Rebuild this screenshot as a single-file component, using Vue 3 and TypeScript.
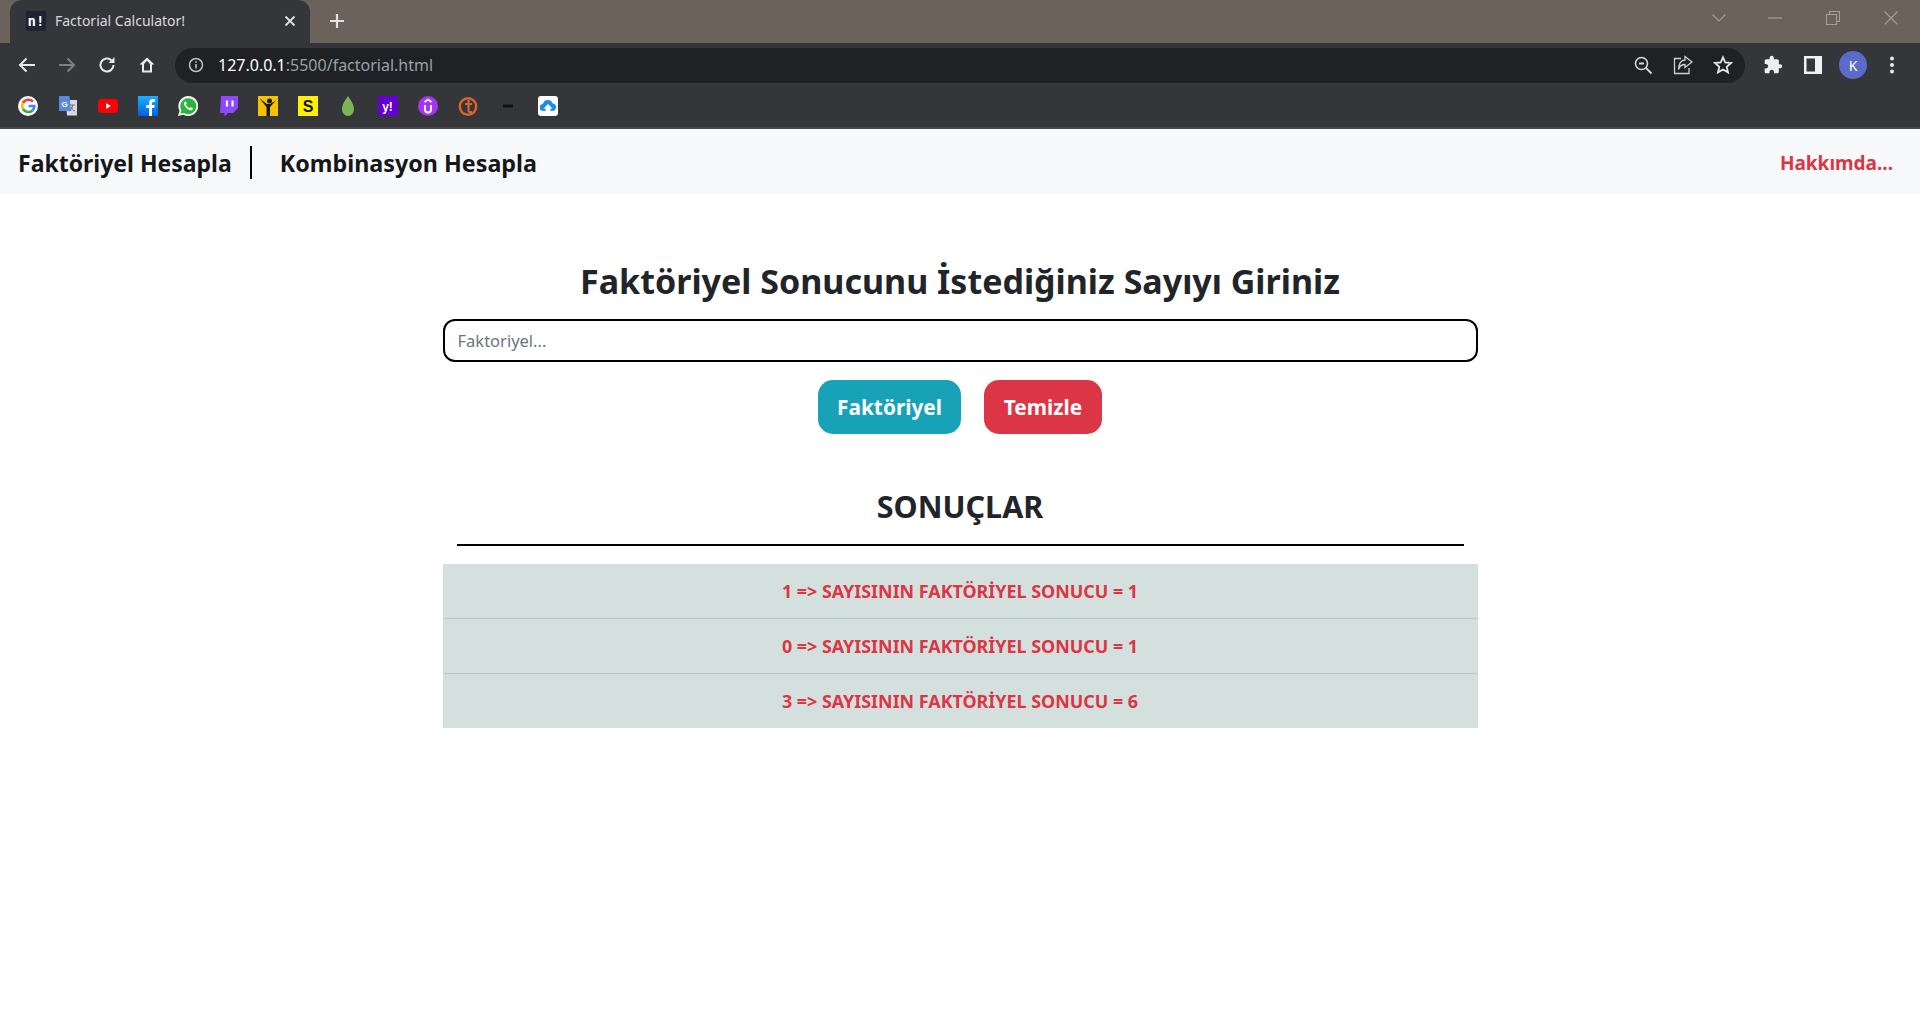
<script setup lang="ts">
const results: { n: number; r: number }[] = [
  { n: 1, r: 1 },
  { n: 0, r: 1 },
  { n: 3, r: 6 },
]
</script>

<template>
  <div class="page">
    <header class="chrome">
      <div class="tabstrip">
        <div class="tab">
          <svg class="fav" width="20" height="20" viewBox="0 0 20 20">
            <rect width="20" height="20" rx="2" fill="#1d2333" />
            <text x="10" y="15" text-anchor="middle" class="favtext">n!</text>
          </svg>
          <span class="tabtitle">Factorial Calculator!</span>
          <svg class="tabclose" width="12" height="12" viewBox="0 0 12 12">
            <path d="M1.5 1.5l9 9M10.5 1.5l-9 9" stroke="#dfe0e2" stroke-width="1.8" fill="none" />
          </svg>
        </div>
        <svg class="plus" width="16" height="16" viewBox="0 0 16 16">
          <path d="M8 1v14M1 8h14" stroke="#e2e2e2" stroke-width="2.2" fill="none" />
        </svg>
        <div class="winctl">
          <svg class="chev" width="16" height="10" viewBox="0 0 16 10"><path d="M1.5 1.5L8 8l6.5-6.5" stroke="#a39d96" stroke-width="1.2" fill="none" /></svg>
          <svg width="14" height="2" viewBox="0 0 14 2"><path d="M0 1h14" stroke="#a39d96" stroke-width="1.2" /></svg>
          <svg width="14" height="14" viewBox="0 0 14 14"><path d="M.5 3.5h10v10H.5zM3.5 3V.5h10v10H11" stroke="#a39d96" stroke-width="1.1" fill="none" /></svg>
          <svg width="14" height="14" viewBox="0 0 14 14"><path d="M.5.5l13 13M13.5.5l-13 13" stroke="#a39d96" stroke-width="1.1" fill="none" /></svg>
        </div>
      </div>

      <div class="toolbar">
        <div class="navicons">
          <svg width="20" height="20" viewBox="0 0 20 20"><path d="M18 10H3M9.5 3.5L3 10l6.500 6.500" stroke="#e8eaed" stroke-width="2" fill="none" /></svg>
          <svg width="20" height="20" viewBox="0 0 20 20"><path d="M2 10h15M10.500 3.500L17 10l-6.500 6.500" stroke="#7d7f82" stroke-width="2" fill="none" /></svg>
          <svg width="20" height="20" viewBox="0 0 20 20"><path d="M16.500 10a6.500 6.500 0 1 1-2-4.700" stroke="#e8eaed" stroke-width="2" fill="none" /><path d="M17.500 2v6h-6z" fill="#e8eaed" /></svg>
          <svg width="20" height="20" viewBox="0 0 20 20"><path d="M10 2.500L2.500 9.500H5v8h10v-8h2.500zM7 15.500V9L10 5.800 13 9v6.500z" fill="#e8eaed" fill-rule="evenodd" /></svg>
        </div>
        <div class="omnibox">
          <svg width="16" height="16" viewBox="0 0 16 16">
            <circle cx="8" cy="8" r="6.500" stroke="#bdc1c6" stroke-width="1.500" fill="none" />
            <path d="M8 7v4.500M8 4.200v1.500" stroke="#bdc1c6" stroke-width="1.600" />
          </svg>
          <span class="url"><b>127.0.0.1</b>:5500/factorial.html</span>
          <div class="omniright">
            <svg width="20" height="20" viewBox="0 0 20 20"><circle cx="8.500" cy="8.500" r="6" stroke="#d5d6d8" stroke-width="1.600" fill="none" /><path d="M13 13l5.500 5.500M6 8.500h5" stroke="#d5d6d8" stroke-width="1.800" fill="none" /></svg>
            <svg width="20" height="20" viewBox="0 0 20 20"><path d="M8 3.500H1.500v15h14.500V13" stroke="#cfd0d2" stroke-width="1.300" fill="none" /><path d="M12 1.500l7 5.500-7 5.500V9.500C8.500 9.500 6.500 11 5.500 14.500 5.500 9 8 5 12 5z" stroke="#cfd0d2" stroke-width="1.300" fill="none" /></svg>
            <svg width="20" height="20" viewBox="0 0 20 20"><path d="M10 2.300l2.300 5.200 5.700.5-4.300 3.800 1.300 5.600L10 14.500l-5 2.900 1.300-5.600L2 8l5.700-.5z" stroke="#e4e5e6" stroke-width="1.800" fill="none" /></svg>
          </div>
        </div>
        <div class="extras">
          <svg width="20" height="20" viewBox="0 0 24 24"><path d="M20.500 11H19V7c0-1.100-.9-2-2-2h-4V3.500C13 2.120 11.880 1 10.500 1S8 2.120 8 3.500V5H4c-1.100 0-1.990.9-1.990 2v3.800H3.500c1.490 0 2.700 1.210 2.700 2.700s-1.210 2.700-2.700 2.700H2V20c0 1.100.9 2 2 2h3.800v-1.500c0-1.490 1.210-2.700 2.700-2.700 1.490 0 2.700 1.210 2.700 2.700V22H17c1.100 0 2-.9 2-2v-4h1.500c1.380 0 2.500-1.120 2.500-2.500S21.880 11 20.500 11z" fill="#eeeff0" /></svg>
          <svg width="18" height="18" viewBox="0 0 18 18"><path d="M0 0h18v18H0zM2.500 2.500v13H11v-13z" fill="#f1f1f2" fill-rule="evenodd" /></svg>
          <div class="avatar">K</div>
          <svg width="6" height="18" viewBox="0 0 6 18"><circle cx="3" cy="2.500" r="2" fill="#e8eaed" /><circle cx="3" cy="9" r="2" fill="#e8eaed" /><circle cx="3" cy="15.500" r="2" fill="#e8eaed" /></svg>
        </div>
      </div>

      <div class="bookmarks">
        <svg width="20" height="20" viewBox="0 0 20 20">
          <circle cx="10" cy="10" r="10" fill="#fff" />
          <path d="M15 5.600A6.300 6.300 0 0 0 5 7" stroke="#ea4335" stroke-width="2.600" fill="none" />
          <path d="M5 7a6.300 6.300 0 0 0 0 6" stroke="#fbbc05" stroke-width="2.600" fill="none" />
          <path d="M5 13a6.300 6.300 0 0 0 9.500 1.500" stroke="#34a853" stroke-width="2.600" fill="none" />
          <path d="M14.500 14.500A6 6 0 0 0 16.300 10H10.500" stroke="#4285f4" stroke-width="2.600" fill="none" />
        </svg>
        <svg width="20" height="20" viewBox="0 0 20 20">
          <path d="M8 4h11v15.500H9z" fill="#d8d9db" />
          <path d="M1 0h10.500l1.500 15H1z" fill="#5a87e0" />
          <text x="6.500" y="10.500" text-anchor="middle" class="gtext">G</text>
          <path d="M12 9h5M14.500 9c0 3-1.500 5-3 6M13 11c.8 2 2.200 3.300 4 4" stroke="#6d6e70" stroke-width="1" fill="none" />
        </svg>
        <svg width="20" height="20" viewBox="0 0 20 20">
          <rect y="3" width="20" height="14" rx="4" fill="#f00" />
          <path d="M8 7l5 3-5 3z" fill="#fff" />
        </svg>
        <svg width="20" height="20" viewBox="0 0 20 20">
          <defs>
            <linearGradient id="fb" x1="0" y1="0" x2="0" y2="1">
              <stop offset="0" stop-color="#19afff" />
              <stop offset="1" stop-color="#0062e0" />
            </linearGradient>
          </defs>
          <rect width="20" height="20" fill="url(#fb)" />
          <path d="M11 20v-8h-2.800V9H11V7c0-2.600 1.500-4 3.800-4h2v3h-1.500c-1 0-1.300.6-1.300 1.400V9h2.800l-.5 3H14v8z" fill="#fff" />
        </svg>
        <svg width="20" height="20" viewBox="0 0 20 20">
          <path d="M0 20l1.500-5.300A10 10 0 1 1 5.400 18.700z" fill="#f2f2f2" />
          <path d="M2.400 17.600l1-3.300A8 8 0 1 1 6 17z" fill="#29b53f" />
          <path d="M7 5.500C5.500 6.500 5.500 8.500 7.500 11c2 2.500 4.500 3.800 6 3.200 1-.4 1.500-1.300 1.500-2l-2.500-1.300-1 1.200C10 11.500 8.500 10 7.900 8.600l.9-1.100L7.800 5.500z" fill="#f4f4f4" />
        </svg>
        <svg width="20" height="20" viewBox="0 0 20 20">
          <path d="M3 0h17v12l-5 5h-5l-3.500 3.500V17H2z" fill="#9146ff" />
          <path d="M9 4.500v6M14.500 4.500v6" stroke="#fff" stroke-width="2.200" />
        </svg>
        <svg width="20" height="20" viewBox="0 0 20 20">
          <rect width="20" height="20" fill="#f6c200" />
          <circle cx="11.500" cy="5" r="2.500" fill="#191919" />
          <path d="M1.500 2.500L8.500 11v9h3.500v-9L18 4.500 12 8H9z" fill="#191919" />
        </svg>
        <svg width="20" height="20" viewBox="0 0 20 20">
          <rect width="20" height="20" fill="#ffef00" />
          <text x="10" y="16" text-anchor="middle" class="stext">S</text>
        </svg>
        <svg width="20" height="20" viewBox="0 0 20 20">
          <path d="M10 0c2 3.500 6 7.500 6 13a6 7 0 0 1-12 0C4 7.500 8 3.500 10 0z" fill="#7cb652" />
        </svg>
        <svg width="20" height="20" viewBox="0 0 20 20">
          <rect width="20" height="20" fill="#5f01d1" />
          <text x="9.500" y="15" text-anchor="middle" class="ytext">y!</text>
        </svg>
        <svg width="20" height="20" viewBox="0 0 20 20">
          <circle cx="10" cy="10" r="10" fill="#a435f0" />
          <path d="M7 9v4.500a3 3 0 0 0 6 0V9" stroke="#fff" stroke-width="1.800" fill="none" />
          <path d="M6.500 6L10 3.500 13.500 6" stroke="#fff" stroke-width="1.800" fill="none" />
        </svg>
        <svg width="20" height="20" viewBox="0 0 20 20">
          <circle cx="10" cy="10.500" r="8.200" stroke="#d9652f" stroke-width="2.400" fill="none" />
          <path d="M10.500 4v10.500c0 1.500 1.200 2 3.500 1.500M7 8h7" stroke="#d9652f" stroke-width="2.200" fill="none" />
        </svg>
        <svg width="20" height="20" viewBox="0 0 20 20">
          <path d="M5 8.500h10v3H5z" fill="#111" />
        </svg>
        <svg width="20" height="20" viewBox="0 0 20 20">
          <rect width="20" height="20" rx="3" fill="#fff" />
          <path d="M5.500 15a3.500 3.500 0 0 1-.5-7 5 5 0 0 1 9.700-.5A3.800 3.800 0 0 1 15 15h-2.500v-2.500h2L10 8l-4.500 4.500h2V15z" fill="#1b8fe8" />
        </svg>
      </div>
    </header>

    <nav class="navbar">
      <div class="navlinks">
        <a class="navlink first">Faktöriyel Hesapla</a>
        <span class="navdiv"></span>
        <a class="navlink second">Kombinasyon Hesapla</a>
      </div>
      <a class="about">Hakkımda...</a>
    </nav>

    <main class="content">
      <h2 class="title">Faktöriyel Sonucunu İstediğiniz Sayıyı Giriniz</h2>
      <input class="field" type="text" placeholder="Faktoriyel..." />
      <div class="buttons">
        <button class="btn teal" type="button">Faktöriyel</button>
        <button class="btn red" type="button">Temizle</button>
      </div>
      <h3 class="subtitle">SONUÇLAR</h3>
      <hr class="rule" />
      <ul class="list">
        <li v-for="(item, i) in results" :key="i" class="row">
          {{ item.n }} =&gt; SAYISININ FAKTÖRİYEL SONUCU = {{ item.r }}
        </li>
      </ul>
    </main>
  </div>
</template>

<style>
html, body { margin: 0; background: #fff; }
</style>

<style scoped>
.page { height: 1029px; overflow: hidden; background: #fff; font-family: "Noto Sans", "Open Sans", sans-serif; color: #212529; }
.chrome { background: #35363a; }
svg { display: block; flex: none; }
.tabstrip { height: 43px; background: #6b625b; display: flex; align-items: center; padding-left: 10px; }
.tab { width: 300px; height: 43px; box-sizing: border-box; background: #35363a; border-radius: 12px 12px 0 0; display: flex; align-items: center; padding: 0 14px 2px 16px; }
.fav { margin-right: 9px; }
.favtext { font: 700 14px "DejaVu Sans Mono", monospace; fill: #fff; }
.tabtitle { flex: 1; font-size: 14px; color: #d9dadc; white-space: nowrap; }
.plus { margin: 0 0 2px 19px; }
.winctl { margin-left: auto; display: flex; align-items: center; gap: 44px; padding: 0 22px 7px 0; }
.chev { margin-right: -3px; }
.toolbar { height: 40px; display: flex; align-items: center; padding: 2px 0 0 17px; }
.navicons { display: flex; gap: 20px; width: 158px; }
.omnibox { width: 1570px; height: 35px; background: #202124; border-radius: 18px; display: flex; align-items: center; padding: 0 12px 0 13px; box-sizing: border-box; }
.url { font-size: 16px; color: #9aa0a6; margin-left: 14px; white-space: nowrap; }
.url b { font-weight: 400; color: #fff; }
.omniright { margin-left: auto; display: flex; gap: 20px; }
.extras { display: flex; align-items: center; margin-left: 18px; }
.extras svg:nth-child(2) { margin-left: 21px; }
.avatar { width: 28px; height: 28px; margin-left: 17px; margin-right: 22px; border-radius: 50%; background: #5a6bc9; color: #fff; font-size: 14px; display: flex; align-items: center; justify-content: center; }
.bookmarks { height: 40px; display: flex; align-items: center; gap: 20px; padding: 1px 0 1px 18px; border-bottom: 2px solid #47484c; }
.gtext { font: 700 8px "Liberation Sans", sans-serif; fill: #fff; }
.stext { font: 700 16px "Liberation Sans", sans-serif; fill: #111; }
.ytext { font: 700 12px "Liberation Sans", sans-serif; fill: #fff; }
.navbar { height: 63px; background: #f8f9fa; display: flex; align-items: center; justify-content: space-between; padding: 2px 27px 0 18px; }
.navlinks { display: flex; align-items: center; }
.navlink { font-size: 23px; font-weight: 700; color: #15171a; white-space: nowrap; }
.second { font-size: 23.300px; }
.navdiv { width: 2px; height: 33px; background: #000; margin: 0 28px 0 18px; }
.about { font-size: 19px; font-weight: 700; color: #dc3545; white-space: nowrap; }
.content { width: 1035px; margin: 0 auto; display: flex; flex-direction: column; align-items: stretch; padding-top: 60px; }
.title { margin: 0 0 11px; height: 54px; line-height: 54px; text-align: center; font-size: 34px; font-weight: 700; white-space: nowrap; }
.field { height: 43px; box-sizing: border-box; width: 100%; border: 2.500px solid #000; border-radius: 12px; padding: 0 13px; font: 400 16.500px "Noto Sans", sans-serif; color: #495057; outline: none; }
.field::placeholder { color: #6c757d; opacity: 1; }
.buttons { display: flex; justify-content: center; gap: 23px; margin-top: 18px; }
.btn { height: 54px; border: 0; border-radius: 15px; color: #fff; font: 700 20.800px "Noto Sans", sans-serif; padding: 0; }
.teal { width: 143px; background: #17a2b8; }
.red { width: 118px; background: #dc3545; }
.subtitle { margin: 47px 0 0; height: 50px; line-height: 50px; text-align: center; font-size: 30.500px; font-weight: 700; }
.rule { margin: 13px 14px 0; height: 2px; background: #000; border: 0; }
.list { list-style: none; margin: 18px 0 0; padding: 0; }
.row { height: 54px; line-height: 54px; text-align: center; background: #d4e0dd; color: #dc3545; font-size: 17.900px; font-weight: 700; border-top: 1px solid #b9c6c3; white-space: nowrap; }
.row:first-child { border-top: 0; }
</style>
